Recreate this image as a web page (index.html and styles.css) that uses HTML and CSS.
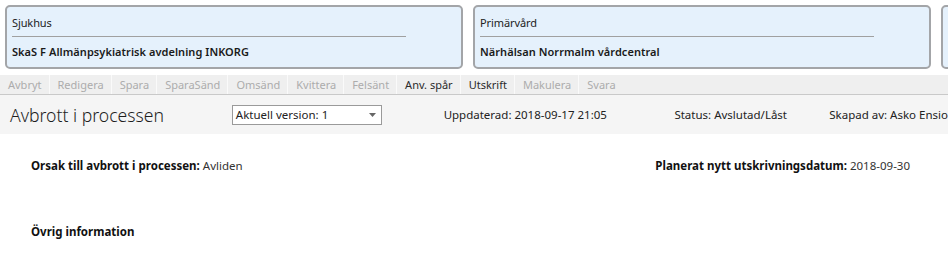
FILE: index.html
```html
<!DOCTYPE html>
<html lang="sv">
<head>
<meta charset="utf-8">
<title>Avbrott i processen</title>
<link rel="stylesheet" href="styles.css">
</head>
<body>
<div class="page">
  <div class="cards">
    <div class="card">
      <div class="card-label">Sjukhus</div>
      <div class="card-rule"></div>
      <div class="card-value">SkaS F Allmänpsykiatrisk avdelning INKORG</div>
    </div>
    <div class="card">
      <div class="card-label">Primärvård</div>
      <div class="card-rule"></div>
      <div class="card-value">Närhälsan Norrmalm vårdcentral</div>
    </div>
    <div class="card"></div>
  </div>
  <div class="toolbar">
    <span class="tb disabled">Avbryt</span>
    <span class="tb disabled">Redigera</span>
    <span class="tb disabled">Spara</span>
    <span class="tb disabled">SparaSänd</span>
    <span class="tb disabled">Omsänd</span>
    <span class="tb disabled">Kvittera</span>
    <span class="tb disabled">Felsänt</span>
    <span class="tb">Anv. spår</span>
    <span class="tb">Utskrift</span>
    <span class="tb disabled">Makulera</span>
    <span class="tb disabled last">Svara</span>
  </div>
  <div class="header">
    <div class="title">Avbrott i processen</div>
    <div class="select">
      <span>Aktuell version: 1</span>
      <svg class="caret" width="7" height="4" viewBox="0 0 7 4"><path d="M0 0H7L3.5 4Z" fill="#666"/></svg>
    </div>
    <div class="meta updated">Uppdaterad: 2018-09-17 21:05</div>
    <div class="meta status">Status: Avslutad/Låst</div>
    <div class="meta creator">Skapad av: Asko Ensio</div>
  </div>
  <div class="content">
    <div class="row">
      <div class="field"><b>Orsak till avbrott i processen:</b> Avliden</div>
      <div class="field right"><b>Planerat nytt utskrivningsdatum:</b> 2018-09-30</div>
    </div>
    <div class="section">Övrig information</div>
  </div>
</div>
</body>
</html>
```
FILE: styles.css
```css
html, body {
  margin: 0;
  padding: 0;
  background: #ffffff;
}
body {
  font-family: "Noto Sans", "Open Sans", sans-serif;
  font-size: 12px;
  color: #222;
  width: 948px;
  height: 276px;
  overflow: hidden;
}
.page {
  width: 948px;
  overflow: hidden;
}
.cards {
  display: flex;
  gap: 10px;
  padding: 5px 0 0 5px;
  height: 65px;
  white-space: nowrap;
  overflow: hidden;
}
.card {
  flex: 0 0 458px;
  box-sizing: border-box;
  height: 64px;
  background: #e5f1fc;
  border: 2px solid #a3a5a8;
  border-radius: 5px;
  padding: 8px 0 0 5px;
}
.card-label {
  font-size: 11px;
  letter-spacing: -0.1px;
  color: #222;
  line-height: 16px;
  height: 16px;
}
.card-rule {
  width: 394px;
  height: 1px;
  background: #a0a0a0;
  margin: 5px 0 6px;
}
.card-value {
  font-size: 11px;
  letter-spacing: 0.05px;
  font-weight: 600;
  color: #1a1a1a;
  line-height: 17px;
}
.toolbar {
  display: flex;
  margin-top: 5px;
  height: 19px;
  background: #efefef;
  border-bottom: 1px solid #c9c9c9;
}
.tb {
  font-size: 11px;
  line-height: 19px;
  padding: 0 7px 0 8px;
  color: #2b2b2b;
  border-right: 1px solid #fafafa;
  white-space: nowrap;
}
.tb.disabled {
  color: #acacac;
}
.tb.last {
  border-right: 0;
}
.header {
  display: flex;
  align-items: center;
  height: 39px;
  background: #f5f5f5;
  white-space: nowrap;
}
.title {
  font-size: 17.6px;
  color: #1e1e1e;
  margin-left: 10px;
  width: 222px;
  font-weight: 300;
}
.select {
  box-sizing: border-box;
  width: 150px;
  height: 20px;
  border: 1px solid #9a9a9a;
  background: #ffffff;
  display: flex;
  align-items: center;
  justify-content: space-between;
  padding: 0 5px 0 3px;
  font-size: 11.5px;
  color: #222;
}
.caret {
  display: block;
}
.meta {
  font-size: 11.5px;
  color: #222;
}
.updated {
  margin-left: 62px;
  width: 231px;
}
.status {
  width: 155px;
}
.content {
  padding: 21px 0 0 31px;
}
.row {
  display: flex;
  height: 20px;
  align-items: center;
}
.field {
  font-size: 11.5px;
  color: #333;
  white-space: nowrap;
}
.field b {
  color: #111;
  font-weight: 700;
}
.field.right {
  margin-left: auto;
  margin-right: 38px;
}
.section {
  margin-top: 49px;
  font-size: 11.5px;
  font-weight: 700;
  color: #111;
}
```
